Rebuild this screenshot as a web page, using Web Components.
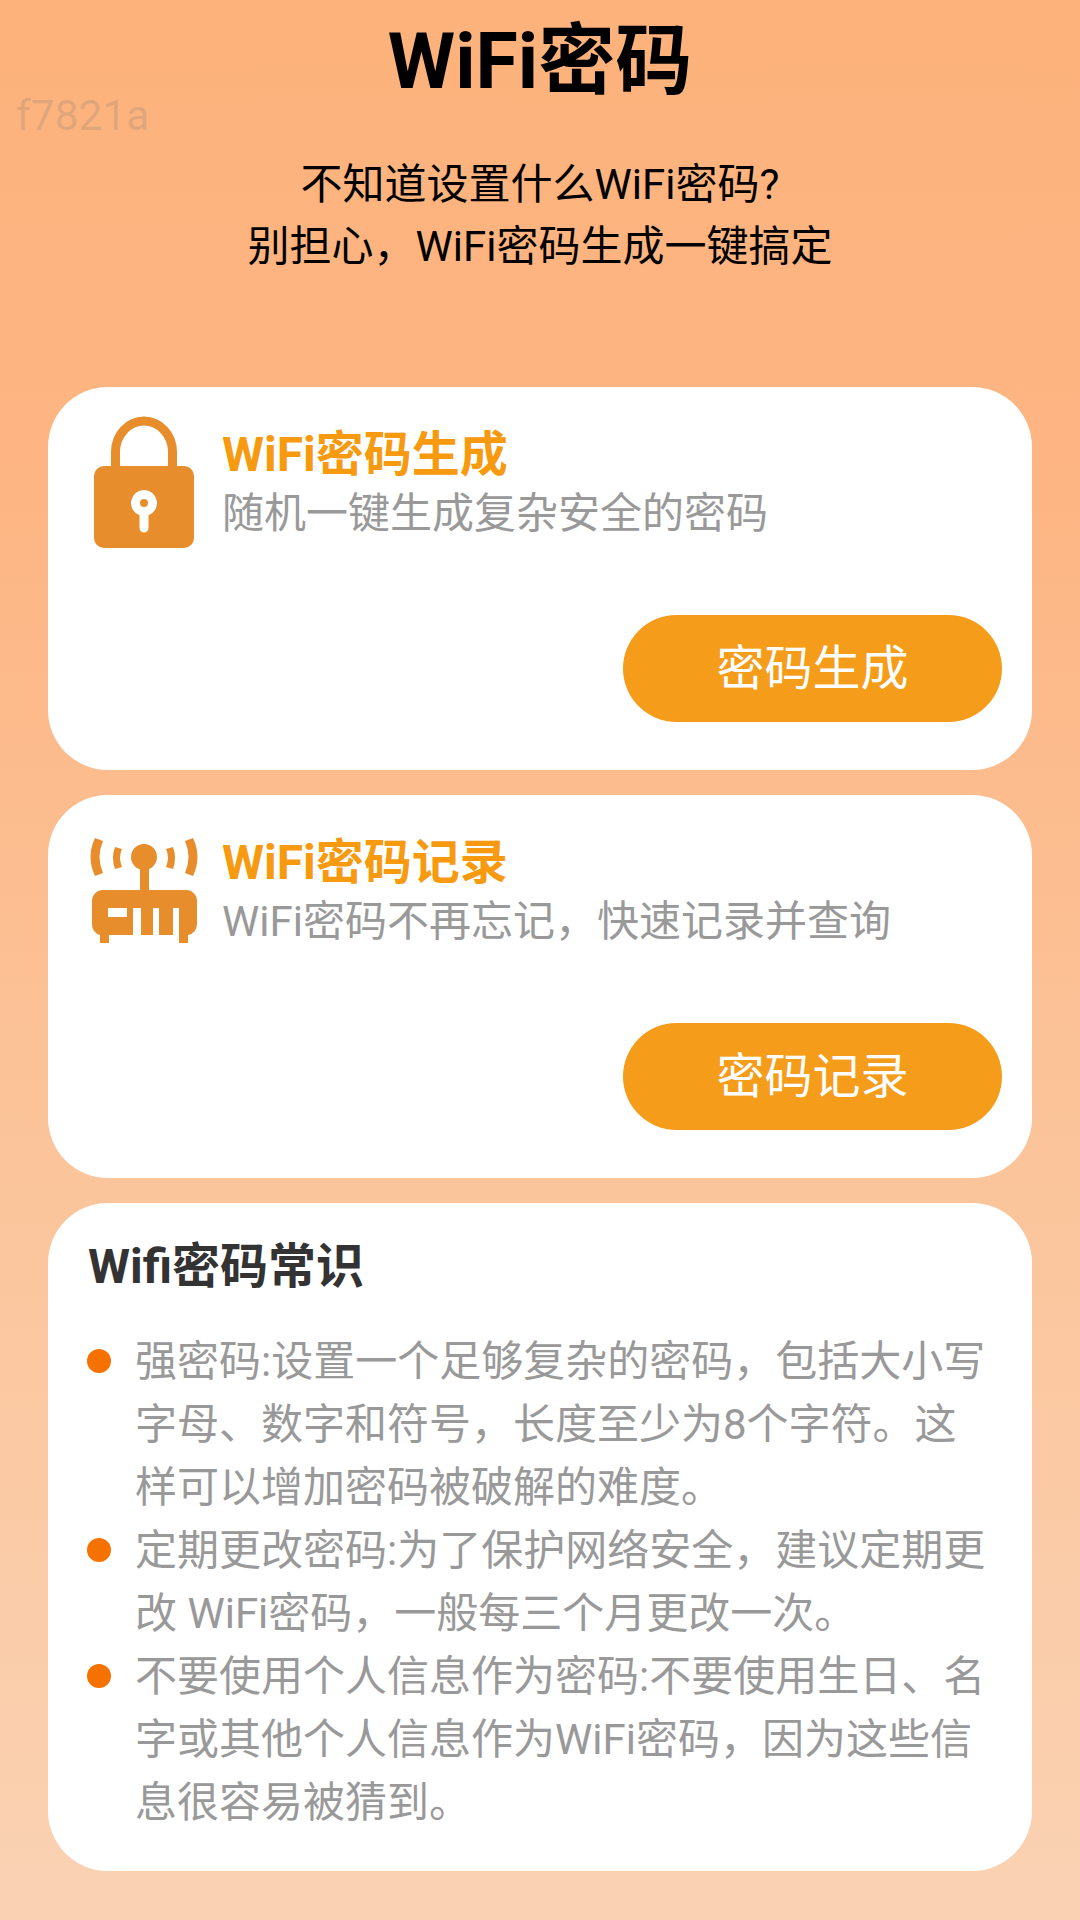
<!DOCTYPE html>
<html lang="zh-CN">
<head>
<meta charset="utf-8">
<title>WiFi密码</title>
<style>
    html, body { margin: 0; padding: 0; }
    body {
        width: 1080px;
        height: 1920px;
        overflow: hidden;
        font-family: Roboto, "Noto Sans CJK SC", sans-serif;
        background: linear-gradient(180deg, #fdb27b 0%, #fdb583 25%, #fbc49a 60%, #fad2b3 100%);
    }
</style>
</head>
<body>
<wifi-page>
    <page-header></page-header>
    <tool-card title-text="WiFi密码生成" desc="随机一键生成复杂安全的密码" action="密码生成" icon="lock"></tool-card>
    <tool-card title-text="WiFi密码记录" desc="WiFi密码不再忘记，快速记录并查询" action="密码记录" icon="router"></tool-card>
    <tips-card heading="Wifi密码常识">
        <tip-item>强密码:设置一个足够复杂的密码，包括大小写字母、数字和符号，长度至少为8个字符。这样可以增加密码被破解的难度。</tip-item>
        <tip-item>定期更改密码:为了保护网络安全，建议定期更改 WiFi密码，一般每三个月更改一次。</tip-item>
        <tip-item>不要使用个人信息作为密码:不要使用生日、名字或其他个人信息作为WiFi密码，因为这些信息很容易被猜到。</tip-item>
    </tips-card>
</wifi-page>

<script>
const ICONS = {
    lock: `<svg style="margin-left:4px" width="100" height="134" viewBox="0 0 100 134">
        <path fill="none" stroke="#e88d2c" stroke-width="9" d="M21.5 56V36a28.5 31 0 0 1 57 0V56"/>
        <path fill="#e88d2c" d="M10 50H90a10 10 0 0 1 10 10V122a10 10 0 0 1-10 10H10a10 10 0 0 1-10-10V60a10 10 0 0 1 10-10Z"/>
        <path fill="#fff" d="M50 74a13 13 0 0 1 4.500 25.200V112a4.500 4.500 0 0 1-9 0V99.200A13 13 0 0 1 50 74Z"/>
        <circle cx="50" cy="87" r="4" fill="#e88d2c"/>
    </svg>`,
    router: `<svg style="margin-top:12px" width="108" height="108" viewBox="0 0 108 108">
        <g fill="#e88d2c">
            <circle cx="54" cy="21" r="13"/>
            <rect x="50" y="30" width="9" height="26"/>
            <path d="M5 2L13 5Q6 21 13 37L5 40Q-4 21 5 2Z"/>
            <path d="M103 2L95 5Q102 21 95 37L103 40Q112 21 103 2Z"/>
            <path d="M25 11L32 13Q28 21.500 32 31L25 33Q21 22 25 11Z"/>
            <path d="M83 11L76 13Q80 21.500 76 31L83 33Q87 22 83 11Z"/>
            <path fill-rule="evenodd" d="M13 54H96a11 11 0 0 1 11 11V88a11 11 0 0 1-9 11V107H89V72H83V99H69V72H63V99H51V72H43V99H19V107H10V99a11 11 0 0 1-8-11V65a11 11 0 0 1 11-11ZM18 72V81H37V72Z"/>
        </g>
    </svg>`
};

class WifiPage extends HTMLElement {
    constructor() {
        super();
        this.attachShadow({ mode: 'open' });
        this.shadowRoot.innerHTML = `
            <style>
                :host {
                    display: flex;
                    flex-direction: column;
                    gap: 25px;
                    padding: 0 48px;
                    position: relative;
                }
                .mark {
                    position: absolute;
                    left: 16px;
                    top: 91px;
                    font-size: 42.5px;
                    line-height: 50px;
                    color: rgba(120, 120, 120, 0.22);
                }
            </style>
            <div class="mark">f7821a</div>
            <slot></slot>
        `;
    }
}

class PageHeader extends HTMLElement {
    constructor() {
        super();
        this.attachShadow({ mode: 'open' });
        this.shadowRoot.innerHTML = `
            <style>
                :host {
                    display: block;
                    text-align: center;
                    color: #000;
                    height: 362px;
                }
                h1 {
                    margin: 0;
                    padding-top: 16px;
                    font-size: 77px;
                    line-height: 92px;
                    font-weight: 700;
                }
                p {
                    margin: 46px 0 0;
                    font-size: 42px;
                    line-height: 62px;
                }
            </style>
            <h1>WiFi密码</h1>
            <p>不知道设置什么WiFi密码?<br>别担心，WiFi密码生成一键搞定</p>
        `;
    }
}

class ToolCard extends HTMLElement {
    constructor() {
        super();
        this.attachShadow({ mode: 'open' });
    }

    connectedCallback() {
        this.shadowRoot.innerHTML = `
            <style>
                :host {
                    display: flex;
                    flex-direction: column;
                    justify-content: space-between;
                    box-sizing: border-box;
                    height: 383px;
                    padding: 29px 30px 48px 42px;
                    background: #fff;
                    border-radius: 60px;
                }
                .head {
                    display: flex;
                    align-items: flex-start;
                }
                .icon {
                    width: 132px;
                    height: 134px;
                    flex: none;
                }
                h2 {
                    margin: 0;
                    padding-top: 9px;
                    font-size: 48px;
                    line-height: 60px;
                    font-weight: 700;
                    color: #f79a10;
                }
                p {
                    margin: 0;
                    padding-top: 1px;
                    font-size: 42px;
                    line-height: 56px;
                    color: #999;
                }
                .btn {
                    align-self: flex-end;
                    box-sizing: border-box;
                    width: 379px;
                    height: 107px;
                    padding-bottom: 10px;
                    border-radius: 54px;
                    background: #f59c1a;
                    color: #fff;
                    font-size: 48px;
                    display: flex;
                    align-items: center;
                    justify-content: center;
                }
            </style>
            <div class="head">
                <div class="icon">${ICONS[this.getAttribute('icon')]}</div>
                <div>
                    <h2>${this.getAttribute('title-text')}</h2>
                    <p>${this.getAttribute('desc')}</p>
                </div>
            </div>
            <div class="btn">${this.getAttribute('action')}</div>
        `;
    }
}

class TipsCard extends HTMLElement {
    constructor() {
        super();
        this.attachShadow({ mode: 'open' });
    }

    connectedCallback() {
        this.shadowRoot.innerHTML = `
            <style>
                :host {
                    display: block;
                    box-sizing: border-box;
                    height: 668px;
                    padding: 34px 42px 0 39px;
                    background: #fff;
                    border-radius: 60px;
                }
                h3 {
                    margin: 0 0 33px 1px;
                    font-size: 48px;
                    line-height: 60px;
                    font-weight: 700;
                    color: #333;
                }
            </style>
            <h3>${this.getAttribute('heading')}</h3>
            <slot></slot>
        `;
    }
}

class TipItem extends HTMLElement {
    constructor() {
        super();
        this.attachShadow({ mode: 'open' });
        this.shadowRoot.innerHTML = `
            <style>
                :host {
                    display: flex;
                    align-items: flex-start;
                    font-size: 42px;
                    line-height: 63px;
                    color: #999;
                }
                .dot {
                    flex: none;
                    width: 24px;
                    height: 24px;
                    margin: 19px 24px 0 0;
                    border-radius: 50%;
                    background: #f57200;
                }
            </style>
            <span class="dot"></span>
            <div><slot></slot></div>
        `;
    }
}

customElements.define('wifi-page', WifiPage);
customElements.define('page-header', PageHeader);
customElements.define('tool-card', ToolCard);
customElements.define('tips-card', TipsCard);
customElements.define('tip-item', TipItem);
</script>
</body>
</html>
